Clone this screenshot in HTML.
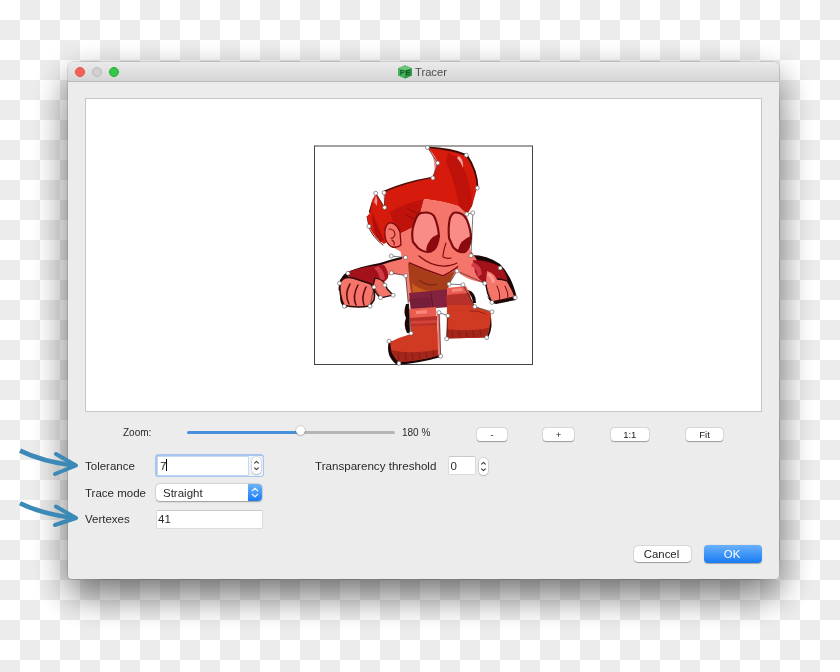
<!DOCTYPE html>
<html><head><meta charset="utf-8">
<style>
html,body{margin:0;padding:0;}
body{width:840px;height:672px;overflow:hidden;position:relative;
  background-color:#fff;
  background-image:conic-gradient(#ececec 0 25%, #fff 0 50%, #ececec 0 75%, #fff 0);
  background-size:40px 40px;
  font-family:"Liberation Sans",sans-serif;color:#2a2a2a;}
.abs{position:absolute;}
#win{position:absolute;will-change:opacity;opacity:0.999;left:68px;top:62px;width:711px;height:517px;background:#ececec;
  border-radius:5px 5px 4px 4px;
  box-shadow:0 0 0 0.5px rgba(0,0,0,0.22), 0 14px 36px rgba(0,0,0,0.4), 0 20px 40px -6px rgba(0,0,0,0.28);overflow:hidden;}
#title{position:absolute;left:0;top:0;width:711px;height:19px;
  background:linear-gradient(#ebebeb,#d5d5d5);border-bottom:1px solid #bcbcbc;}
.tl{position:absolute;top:5px;width:10.5px;height:10.5px;border-radius:50%;box-sizing:border-box;}
.lbl{position:absolute;font-size:11.5px;line-height:12px;white-space:nowrap;}
.btn{position:absolute;height:13px;background:#fff;border-radius:3px;box-shadow:0 0 0 0.5px rgba(0,0,0,0.12),0 0.5px 1px rgba(0,0,0,0.3);
  font-size:9.5px;line-height:13.5px;text-align:center;color:#222;}
.field{position:absolute;background:#fff;box-shadow:0 0 0 0.5px #c9c9c9, 0 -0.5px 0 #a9a9a9;}
.step{position:absolute;background:#fff;border-radius:4px;box-shadow:0 0 0 0.5px rgba(0,0,0,0.12),0 0.5px 1.5px rgba(0,0,0,0.3);}
</style></head>
<body>
<div id="win">
  <div id="title">
    <div class="tl" style="left:6.9px;top:4.8px;background:#fc605b;border:0.5px solid #de4a44"></div>
    <div class="tl" style="left:23.9px;top:4.8px;background:#d0d0d0;border:0.5px solid #b8b8b8"></div>
    <div class="tl" style="left:40.9px;top:4.8px;background:#34c84a;border:0.5px solid #27a837"></div>
    <svg class="abs" style="left:329px;top:2px" width="16" height="16" viewBox="0 0 16 16">
      <polygon points="1.2,4.2 8,1.2 14.8,4.2 14.8,11.4 8,14.6 1.2,11.4" fill="#3aa852"/>
      <polygon points="1.2,4.2 8,1.2 14.8,4.2 8,6.4" fill="#6cc47a"/>
      <polygon points="8,6.4 14.8,4.2 14.8,11.4 8,14.6" fill="#2f9446"/>
      <polygon points="1.2,4.2 8,6.4 8,14.6 1.2,11.4" fill="#45b25a"/>
      <text x="2.8" y="11.2" font-size="7.6" font-weight="bold" fill="#145f22" font-family="Liberation Sans">P</text>
      <text x="8.6" y="11.2" font-size="7.6" font-weight="bold" fill="#145f22" font-family="Liberation Sans">E</text>
    </svg>
    <div class="lbl" style="left:347px;top:4px;font-size:11.2px;color:#4b4b4b">Tracer</div>
  </div>
  <!-- canvas -->
  <div class="abs" style="left:18px;top:37px;width:675px;height:312px;background:#fff;box-shadow:0 0 0 1px #c6c6c6"></div>

  <!-- zoom row -->
  <div class="lbl" style="left:55px;top:365px;font-size:10px">Zoom:</div>
  <div class="abs" style="left:119px;top:369px;width:113px;height:3px;background:#4a8fdb;border-radius:1.5px"></div>
  <div class="abs" style="left:232px;top:369px;width:95px;height:3px;background:#b5b5b5;border-radius:1.5px"></div>
  <div class="abs" style="left:227.5px;top:364px;width:9px;height:9px;border-radius:50%;background:#fff;box-shadow:0 0 0 0.5px rgba(0,0,0,0.15),0 0.5px 1.5px rgba(0,0,0,0.35)"></div>
  <div class="lbl" style="left:334px;top:365px;font-size:10px">180 %</div>
  <div class="btn" style="left:409px;top:365.5px;width:30px">-</div>
  <div class="btn" style="left:475px;top:365.5px;width:31px">+</div>
  <div class="btn" style="left:542.5px;top:365.5px;width:38.5px">1:1</div>
  <div class="btn" style="left:618px;top:365.5px;width:37px">Fit</div>

  <!-- tolerance -->
  <div class="lbl" style="left:17px;top:398px">Tolerance</div>
  <div class="abs" style="left:87px;top:392px;width:109px;height:23px;border-radius:3.5px;background:#a6c6ef"></div>
  <div class="abs" style="left:88.5px;top:393.5px;width:106px;height:20px;border-radius:2px;background:#eef4fc"></div>
  <div class="field" style="left:89.5px;top:394.5px;width:90px;height:18px;box-shadow:0 0 0 0.5px #9fbde6"></div>
  <div class="lbl" style="left:92px;top:398px">7</div>
  <div class="abs" style="left:98px;top:397px;width:1px;height:12px;background:#000"></div>
  <div class="step" style="left:183.5px;top:395px;width:9px;height:17px"></div>
  <svg class="abs" style="left:183.5px;top:395px" width="9" height="17" viewBox="0 0 9 17">
    <path d="M2.6 6.2 L4.5 4.3 L6.4 6.2 M2.6 10.8 L4.5 12.7 L6.4 10.8" fill="none" stroke="#3c3c3c" stroke-width="1.1" stroke-linecap="round" stroke-linejoin="round"/>
  </svg>

  <div class="lbl" style="left:247px;top:398px;font-size:11.6px">Transparency threshold</div>
  <div class="field" style="left:380.5px;top:395px;width:26.5px;height:17px"></div>
  <div class="lbl" style="left:382.5px;top:397.5px">0</div>
  <div class="step" style="left:411px;top:395.5px;width:9px;height:17px"></div>
  <svg class="abs" style="left:411px;top:395.5px" width="9" height="17" viewBox="0 0 9 17">
    <path d="M2.6 6.2 L4.5 4.3 L6.4 6.2 M2.6 10.8 L4.5 12.7 L6.4 10.8" fill="none" stroke="#3c3c3c" stroke-width="1.1" stroke-linecap="round" stroke-linejoin="round"/>
  </svg>

  <!-- trace mode -->
  <div class="lbl" style="left:17px;top:425px">Trace mode</div>
  <div class="abs" style="left:88px;top:422px;width:106px;height:17px;border-radius:4px;background:#fff;box-shadow:0 0 0 0.5px rgba(0,0,0,0.12),0 0.5px 1.5px rgba(0,0,0,0.3);overflow:hidden">
    <div class="abs" style="left:92px;top:0;width:14px;height:17px;background:linear-gradient(#6cb3fa,#1a7cf5)"></div>
  </div>
  <svg class="abs" style="left:180px;top:422px" width="14" height="17" viewBox="0 0 14 17">
    <path d="M4.3 6.8 L7 4.2 L9.7 6.8 M4.3 10.2 L7 12.8 L9.7 10.2" fill="none" stroke="#e8f3ff" stroke-width="1.2" stroke-linecap="round" stroke-linejoin="round"/>
  </svg>
  <div class="lbl" style="left:95px;top:425px">Straight</div>

  <!-- vertexes -->
  <div class="lbl" style="left:17px;top:451px">Vertexes</div>
  <div class="field" style="left:89px;top:449px;width:105px;height:17px"></div>
  <div class="lbl" style="left:90px;top:451px">41</div>

  <!-- buttons -->
  <div class="btn" style="left:565.5px;top:483.5px;width:57px;height:16.5px;line-height:16px;font-size:11.4px;border-radius:4px;text-indent:-1px">Cancel</div>
  <div class="btn" style="left:635.5px;top:483px;width:58px;height:17.5px;line-height:18.5px;font-size:11.4px;border-radius:4px;text-indent:-1px;color:#fff;background:linear-gradient(#69b1fa,#1a7bf4);box-shadow:0 0.5px 1px rgba(0,0,0,0.3)">OK</div>
</div>

<!-- CHAR --><svg class="abs" style="left:0;top:0" width="840" height="672" viewBox="0 0 840 672">
  <rect x="314.5" y="146" width="218" height="218.5" fill="#fff" stroke="#454545" stroke-width="1"/>
  <g stroke-linejoin="round" stroke-linecap="round">
  <!-- black outline / shadow shapes -->
  <g fill="#1c0606">
    <path d="M338.5 290 Q338 278 347 272 Q362 266 380 263 Q395 258 406 256 L408 260 Q394 262 380 266 Q362 269 349 276 Q343 281 342 292 Z"/>
    <path d="M468 255 Q486 254 500 264 Q512 276 517 298 L511 297 Q505 278 496 270 L470 262 Z"/>
    <path d="M406 304 Q403 312 406 318 Q403 325 407 333 L410 333 L409 304 Z"/>
    <path d="M389 341 Q385 356 397 365 Q420 363 441 357 L440 352 L398 358 Q392 352 392 341 Z"/>
    <path d="M468 290 Q476 292 476 303 L473 303 Q472 295 468 293 Z"/>
    <path d="M490 313 Q494 326 488 338 L486 336 Q490 326 488 314 Z"/>
    <path d="M427 146.5 Q452 147.5 467.5 154.5 Q478 170 478.5 188 L473 182 Q470 167 462 159 Q446 153.5 431 151.5 Z" fill="#3a0a06"/>
    <path d="M384 190.5 Q405 181.5 431 177 L432 180.5 Q406 184.5 387 194 Z" fill="#4a0e08"/>
    <path d="M372.5 199 L368.8 212 L370.5 214 L373 206 Z" fill="#4a0e08"/><path d="M366.5 216 L368.5 227 L370.5 226 L369.5 219 Z" fill="#4a0e08"/><path d="M368.5 226 Q372 237 383 245" fill="none" stroke="#4a0e08" stroke-width="0.9"/>
    <path d="M340 296 Q340 306 346 308 L350 304 Z"/>
    <path d="M487 296 Q490 303 496 304 L516 300 L514 296 L492 301 Z"/>
  </g>
  <!-- base skin under face/neck/torso -->
  <path fill="#f5756a" d="M400 248 L472 252 L478 262 L457 271 L449 284 L410 300 L404 270 Z"/>
  <!-- hair -->
  <path fill="#d61b0c" d="M369 226 L366.8 216.5 L370 213 L372.6 199.5 L376 193 L384 206 L385 192 Q405 183 432 178 L438 163 L428 148 Q452 150 466 156 Q476 170 477 188 L472 206 L467 214 L458 206 Q442 201 424 199 L420 214 Q418 222 413 227 Q408 230 399 234 Q390 240 384 244 Q374 238 369 226 Z"/>
  <path fill="#bf120a" d="M446 162 Q456 185 459 206 L467 214 L472 206 Q476 188 470 170 Q462 158 448 153 Z"/>
  <path fill="#bf120a" d="M390 212 Q405 203 424 199 L420 214 Q418 222 413 227 Q408 230 399 234 Q393 224 390 212 Z"/>
  <path fill="#b0100a" d="M372 212 Q378 226 384 240 L380 242 Q372 232 372 212 Z"/>
  <path fill="#f08a86" d="M429 149 Q436 156 438 163 L433.5 176 Q437 162 429 149 Z"/>
  <path fill="#d51a0c" d="M465 159 Q473 172 475 188 L472 203 Q471 182 461 163 Z"/>
  <path fill="#f7a0a0" d="M459 156 Q464 160 463 168 Q461 162 457 158 Z"/>
  <path fill="#f59090" d="M376 195 Q378 200 377 206 L374 202 Z"/>
  <path fill="none" stroke="#7d0a0e" stroke-width="0.8" d="M408 209 L421 215 M406 215 L418 221"/>
  <!-- face -->
  <path fill="#f5756a" d="M424 199 Q445 201 458 206 L467 214 L471 256 Q455 268 441 276 Q425 268 409 257 L398 250 L390 246 L399 234 Q408 230 413 227 Q418 222 420 214 Z"/>
  <path fill="none" stroke="#7d0a0e" stroke-width="1.4" d="M407 262 Q425 270 443 276 Q455 270 466 260"/>
  <!-- ear -->
  <path fill="#f5756a" stroke="#7d0a0e" stroke-width="1.3" d="M400 232 Q396 222 389 223 Q384 226 385 236 Q386 244 392 247 Q398 248 401 245 Z"/>
  <path fill="none" stroke="#7d0a0e" stroke-width="1.1" d="M389 229 Q395 229 395 235 Q393 239 391 238 M392 240 Q395 242 394 245"/>
  <!-- eyes -->
  <path fill="#fa8c88" stroke="#7d0a0e" stroke-width="2.1" d="M421 213 Q430 211 434 216 Q438 224 439 236 Q438 247 431 251.5 Q424 253 418 248 L413 242 Q411 232 414 224 Q417 214 421 213 Z"/>
  <path fill="#8a0a10" d="M438.5 234 Q440 246 434 251 Q428 253 426 250 Q428 238 438.5 234 Z"/>
  <path fill="#fa8c88" stroke="#7d0a0e" stroke-width="2.1" d="M455 212.5 Q463 212 467 220 Q471 230 471 238 Q470 248 465 252 Q458 253 453 247 L449 238 Q448 226 450 218 Q452 213 455 212.5 Z"/>
  <path fill="#8a0a10" d="M471 236 Q471 248 465 252 Q460 253 458 250 Q460 240 471 236 Z"/>
  <path fill="none" stroke="#7d0a0e" stroke-width="1.3" d="M419 256 Q432 267 446 266 Q455 265 461 261"/>
  <path fill="none" stroke="#7d0a0e" stroke-width="1.1" d="M446 243 Q443 252 443 257 Q447 259 451 258"/>
  <!-- left arm -->
  <path fill="#f5756a" d="M378 266 Q392 261 406 258 L409 262 L407 276 Q396 273 389 275 L380 282 Z"/>
  <path fill="#a3121a" d="M347 272 Q364 266 384 265 Q389 271 388 278 Q383 284 376 287 Q362 283 350 280 Z"/>
  <path fill="#d23a48" d="M378 266 Q384 270 385 279 L380 282 Q380 273 374 268 Z"/>
  <path fill="#f5756a" stroke="#2a0808" stroke-width="1.5" d="M340 283 Q343 276 353 278 L371 284 Q376 292 374 300 L370 306 Q356 308 344 305.5 Q339 295 340 283 Z"/>
  <path fill="#f5756a" stroke="#2a0808" stroke-width="1.2" d="M375 278 Q386 280 387 289 L393 295 L381 298 Q375 294 373 286 Z"/>
  <path fill="none" stroke="#5a0a10" stroke-width="1.5" d="M350 284 Q344 294 349 304 M358 285 Q352 296 356 305 M366 287 Q361 297 364 305"/>
  <!-- right arm -->
  <path fill="#f5756a" d="M457 262 Q466 256 476 259 L482 268 L486 283 Q472 282 460 274 Z"/>
  <path fill="#a3121a" d="M473 260 Q490 260 502 268 Q508 276 508 286 L487 285 Q478 280 475 272 Z"/>
  <path fill="#d23a48" d="M473 262 Q481 265 482 274 L478 277 Q477 268 471 266 Z"/>
  <path fill="#f5756a" stroke="#2a0808" stroke-width="1.3" d="M486 281 Q497 277 507 281 Q513 290 515 297 L492 302 Q486 294 486 281 Z"/>
  <path fill="#f5756a" d="M487 271 Q495 273 498 282 Q499 290 494 293 Q488 290 486 282 Z"/>
  <path fill="#fa9a94" d="M489 273 Q494 276 495 282 L492 283 Q491 277 487 275 Z"/>
  <path fill="none" stroke="#6a0a10" stroke-width="1" d="M497 286 Q501 294 499 301 M505 286 Q509 293 508 299"/>
  <!-- torso pink side -->
  <path fill="#f08078" d="M405 272 L412 272 L414 302 L408 302 Z"/>
  <!-- shirt -->
  <path fill="#a83e19" d="M408 263 Q426 271 443 277 Q450 273 455 271 L449 284 L447 296 L412 300 Q409 282 408 263 Z"/>
  <path fill="#c95b1c" d="M412 283 Q418 290 440 293 L446 296 L413 299 Z"/>
  <path fill="none" stroke="#7a2810" stroke-width="1.1" d="M419 280 Q428 287 437 284"/>
  <!-- shorts -->
  <path fill="#82223f" d="M409 293 Q430 291 450 289 L462 288 Q467 298 465 306 L436 308 L411 311 Z"/>
  <path fill="#6a1834" d="M409 299 L430 297 L431 309 L411 311 Z" opacity="0.5"/>
  <path fill="none" stroke="#5e1430" stroke-width="0.9" d="M431 293 L433 308"/>
  <!-- left leg -->
  <path fill="#e85d50" d="M409 309 L436 307 L437 328 L411 330 Z"/>
  <path fill="#f7867c" d="M416 311 L427 310 L427 313.5 L416 314 Z"/>
  <path fill="#b8302a" d="M410 318 L437 316 L437 326 L411 327 Z"/>
  <path fill="#e05040" d="M411 321 L437 320 L437 323 L411 324 Z" opacity="0.6"/>
  <!-- left boot -->
  <path fill="#d13a22" d="M411 326 L437 325 L440 355 Q420 361 399 362 Q391 356 390 342 Q400 337 411 334 Z"/>
  <path fill="#a4251a" d="M391 350 Q412 355 440 349 L440 355 Q420 361 399 362 Q392 356 391 350 Z"/>
  <path fill="none" stroke="#7a1a12" stroke-width="0.7" d="M398 352 L399 360 M405 353 L406 360 M412 353 L413 360 M419 353 L420 359 M426 352 L427 358 M433 351 L434 357"/>
  <path fill="#f08078" d="M437 312 L440 312 L441 355 L438 355 Z"/>
  <!-- right leg/boot -->
  <path fill="#e85d50" d="M447 288 L466 286 L471 296 L447 298 Z"/>
  <path fill="#f7867c" d="M452 289 L462 288 L463 291 L452 292 Z"/>
  <path fill="#b8302a" d="M446 295 L469 293 L474 305 L447 306 Z"/>
  <path fill="#d13a22" d="M447 305 L474 305 L476 307 L491 312 Q491 326 487 337.5 L446.5 338.5 Z"/>
  <path fill="#a4251a" d="M447 329 Q470 332 489 328 L487 337.5 L446.5 338.5 Z"/>
  <path fill="none" stroke="#7a1a12" stroke-width="0.7" d="M452 331 L453 337 M459 331 L460 337 M466 331 L467 337 M473 331 L474 337 M480 330 L481 336"/>
  <path fill="none" stroke="#8a1a12" stroke-width="0.8" d="M470 311 Q478 310 486 314"/>
  </g>
  <!-- trace polygon -->
  <g fill="none" stroke="#222" stroke-width="0.6">
    <polyline points="427.5,147.5 437.7,162.9 432.9,178"/>
    <polyline points="384.1,192.7 384.6,207.5 375.7,193.2"/>
    <polyline points="391.25,256 405.5,257.5"/>
    <polyline points="466.8,214.1 472.9,212.9 471,255.7"/>
    <polyline points="391.4,272.9 405.7,275.7 411,333.3"/>
    <polyline points="384.8,285.2 393.1,295.2 380.5,297.6 374,287.1"/>
    <polyline points="370,306.2 374,287.1"/>
    <polyline points="456.9,271 449,284 462.9,284.8 474.8,306.7 491.9,311.9"/>
    <polyline points="456.9,271 484.8,283.3 491.9,302.4"/>
    <polyline points="440.7,356.2 439,312.6 447.9,315.7 446.7,338.8"/>
  </g>
  <g fill="#fff" stroke="#555" stroke-width="0.6">
    <circle cx="427.5" cy="147.5" r="2"/><circle cx="466.3" cy="155.2" r="2"/><circle cx="437.7" cy="162.9" r="2"/>
    <circle cx="432.9" cy="178" r="2"/><circle cx="477.3" cy="187.9" r="2"/><circle cx="375.7" cy="193.2" r="2"/>
    <circle cx="384.1" cy="192.7" r="2"/><circle cx="384.6" cy="207.5" r="2"/><circle cx="466.8" cy="214.1" r="2"/>
    <circle cx="472.9" cy="212.9" r="2"/><circle cx="368.9" cy="226.3" r="2"/><circle cx="391.25" cy="256" r="2"/>
    <circle cx="405.5" cy="257.5" r="2"/><circle cx="471" cy="255.7" r="2"/>
    <circle cx="347.9" cy="273.3" r="2"/><circle cx="391.4" cy="272.9" r="2"/><circle cx="405.7" cy="275.7" r="2"/>
    <circle cx="456.9" cy="271" r="2"/><circle cx="500.2" cy="268.1" r="2"/><circle cx="339.5" cy="283.3" r="2"/>
    <circle cx="374" cy="287.1" r="2"/><circle cx="384.8" cy="285.2" r="2"/><circle cx="484.8" cy="283.3" r="2"/>
    <circle cx="449" cy="284" r="2"/><circle cx="462.9" cy="284.8" r="2"/><circle cx="393.1" cy="295.2" r="2"/>
    <circle cx="380.5" cy="297.6" r="2"/><circle cx="515.2" cy="297.6" r="2"/><circle cx="491.9" cy="302.4" r="2"/>
    <circle cx="344.3" cy="306.2" r="2"/><circle cx="370" cy="306.2" r="2"/><circle cx="474.8" cy="306.7" r="2"/>
    <circle cx="439" cy="312.6" r="2"/><circle cx="447.9" cy="315.7" r="2"/><circle cx="491.9" cy="311.9" r="2"/>
    <circle cx="411" cy="333.3" r="2"/><circle cx="389" cy="341.2" r="2"/><circle cx="446.7" cy="338.8" r="2"/>
    <circle cx="486.7" cy="337.6" r="2"/><circle cx="440.7" cy="356.2" r="2"/><circle cx="399" cy="363.3" r="2"/>
  </g>
</svg>
<!-- /CHAR -->

<!-- arrows -->
<svg class="abs" style="left:0;top:0" width="840" height="672">
  <g fill="none" stroke="#3b89b6" stroke-linecap="round" stroke-linejoin="round">
    <path d="M20 450.6 Q42 461.5 74 465.5" stroke-width="4.6" stroke-linecap="butt"/>
    <path d="M56 454 L76 465.5 L55 474" stroke-width="4"/>
    <path d="M20 503.3 Q42 514 74 518" stroke-width="4.6" stroke-linecap="butt"/>
    <path d="M56 506.5 L76 518 L55 525" stroke-width="4"/>
  </g>
</svg>
</body></html>
